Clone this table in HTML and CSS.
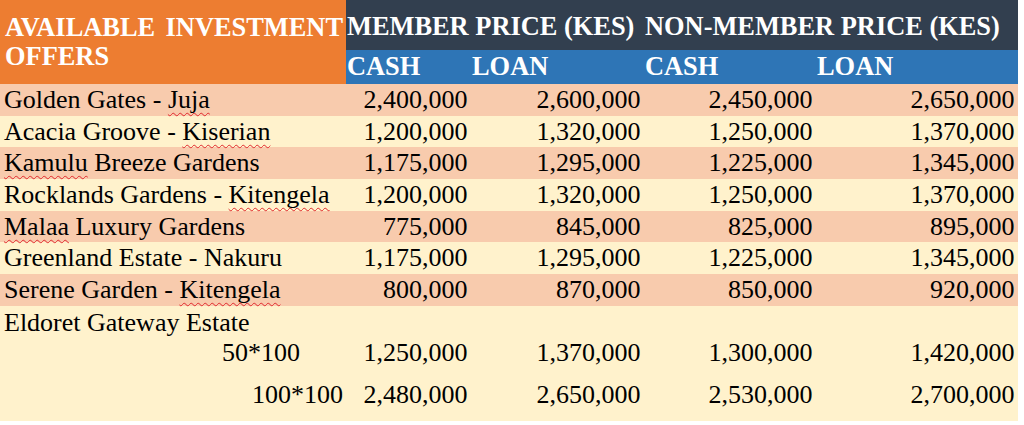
FILE: index.html
```html
<!DOCTYPE html>
<html lang="en">
<head>
<meta charset="utf-8">
<title>Available Investment Offers</title>
<link rel="stylesheet" href="styles.css">
</head>
<body>
<div class="sheet">
  <div class="head">
    <div class="title">AVAILABLE INVESTMENT OFFERS</div>
    <div class="group g-member">MEMBER PRICE (KES)</div>
    <div class="group g-non">NON-MEMBER PRICE (KES)</div>
    <div class="sub">CASH</div>
    <div class="sub">LOAN</div>
    <div class="sub">CASH</div>
    <div class="sub">LOAN</div>
  </div>

  <div class="row odd">
    <div class="name">Golden Gates - <span class="spell">Juja</span></div>
    <div class="num">2,400,000</div><div class="num">2,600,000</div><div class="num">2,450,000</div><div class="num">2,650,000</div>
  </div>
  <div class="row even">
    <div class="name">Acacia Groove - <span class="spell">Kiserian</span></div>
    <div class="num">1,200,000</div><div class="num">1,320,000</div><div class="num">1,250,000</div><div class="num">1,370,000</div>
  </div>
  <div class="row odd">
    <div class="name"><span class="spell">Kamulu</span> Breeze Gardens</div>
    <div class="num">1,175,000</div><div class="num">1,295,000</div><div class="num">1,225,000</div><div class="num">1,345,000</div>
  </div>
  <div class="row even">
    <div class="name">Rocklands Gardens - <span class="spell">Kitengela</span></div>
    <div class="num">1,200,000</div><div class="num">1,320,000</div><div class="num">1,250,000</div><div class="num">1,370,000</div>
  </div>
  <div class="row odd">
    <div class="name"><span class="spell">Malaa</span> Luxury Gardens</div>
    <div class="num">775,000</div><div class="num">845,000</div><div class="num">825,000</div><div class="num">895,000</div>
  </div>
  <div class="row even">
    <div class="name">Greenland Estate - Nakuru</div>
    <div class="num">1,175,000</div><div class="num">1,295,000</div><div class="num">1,225,000</div><div class="num">1,345,000</div>
  </div>
  <div class="row odd">
    <div class="name">Serene Garden - <span class="spell">Kitengela</span></div>
    <div class="num">800,000</div><div class="num">870,000</div><div class="num">850,000</div><div class="num">920,000</div>
  </div>

  <div class="estate">
    <div class="row plain">
      <div class="name">Eldoret Gateway Estate</div>
    </div>
    <div class="row plain">
      <div class="size size-a">50*100</div>
      <div class="num">1,250,000</div><div class="num">1,370,000</div><div class="num">1,300,000</div><div class="num">1,420,000</div>
    </div>
    <div class="row plain last">
      <div class="size">100*100</div>
      <div class="num">2,480,000</div><div class="num">2,650,000</div><div class="num">2,530,000</div><div class="num">2,700,000</div>
    </div>
  </div>
</div>
</body>
</html>
```

FILE: styles.css
```css
html, body {
  margin: 0;
  padding: 0;
  background: #ffffff;
}

body {
  font-family: "Liberation Serif", "Times New Roman", serif;
  font-size: 26px;
  color: #000000;
}

.sheet {
  width: 1018px;
  --cols: 346px 125px 173px 172px 202px;
}

.head {
  display: grid;
  grid-template-columns: var(--cols);
  grid-template-rows: 50px 34px;
  color: #ffffff;
  font-weight: bold;
  font-size: 26.4px;
  line-height: 29px;
}

.title {
  grid-row: 1 / 3;
  grid-column: 1;
  background: #ed7d31;
  padding: 13px 3px 0 5px;
  text-align: justify;
}

.group {
  background: #323f4f;
  padding: 12px 0 0 1px;
  white-space: nowrap;
}

.g-member { grid-column: 2 / 4; }
.g-non { grid-column: 4 / 6; }

.sub {
  background: #2e75b6;
  padding: 2px 0 0 1px;
  white-space: nowrap;
}

.sub:nth-of-type(3) { padding-left: 2px; }
.sub:nth-last-of-type(1) { padding-left: 1px; }

.head .sub:last-child {
  grid-column: 5;
}

.head::after {
  content: "";
}

.row {
  display: grid;
  grid-template-columns: var(--cols);
  height: 31.7px;
  line-height: 31.7px;
  white-space: nowrap;
}

.odd { background: #f8cbad; }
.even { background: #fff2cc; }

.name {
  padding-left: 4px;
}

.num {
  text-align: right;
  padding-right: 3.5px;
}

.spell {
  text-decoration: underline wavy #e0282c;
  text-decoration-thickness: 1px;
  text-underline-offset: 4px;
  text-decoration-skip-ink: none;
}

.estate {
  background: #fff2cc;
  height: 115px;
}

.plain {
  background: transparent;
}

.estate .row:first-child {
  padding-top: 1px;
  height: 30px;
}

.size {
  text-align: right;
  padding-right: 3px;
}

.size-a {
  padding-right: 46px;
}

.last {
  padding-top: 10px;
}
```
